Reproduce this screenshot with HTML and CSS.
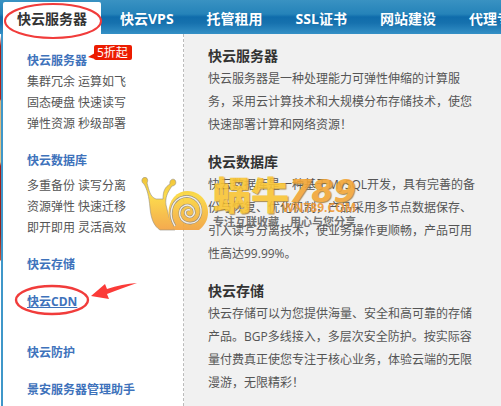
FILE: index.html
```html
<!DOCTYPE html>
<html lang="zh-CN">
<head>
  <meta charset="UTF-8">
  <meta name="viewport" content="width=device-width, initial-scale=1.0">
  <title>快云服务器</title>
  <link rel="stylesheet" href="styles.css">
</head>
<body>
  <nav class="topnav">
    <a class="tab active" href="#">快云服务器</a>
    <a class="tab" href="#">快云VPS</a>
    <a class="tab" href="#">托管租用</a>
    <a class="tab" href="#">SSL证书</a>
    <a class="tab" href="#">网站建设</a>
    <a class="tab" href="#">代理专区</a>
  </nav>

  <div class="panel">
    <div class="banner-edge"></div>

    <aside class="menu">
      <section class="group">
        <h3><a href="#">快云服务器</a><span class="badge">5折起</span></h3>
        <p>集群冗余 运算如飞</p>
        <p>固态硬盘 快速读写</p>
        <p>弹性资源 秒级部署</p>
      </section>
      <section class="group database">
        <h3><a href="#">快云数据库</a></h3>
        <p>多重备份 读写分离</p>
        <p>资源弹性 快速迁移</p>
        <p>即开即用 灵活高效</p>
      </section>
      <section class="group">
        <h3><a href="#">快云存储</a></h3>
      </section>
      <section class="group cdn">
        <h3><a class="current" href="#">快云CDN</a></h3>
      </section>
      <section class="group">
        <h3><a href="#">快云防护</a></h3>
      </section>
      <section class="group">
        <h3><a href="#">景安服务器管理助手</a></h3>
      </section>
    </aside>

    <main class="detail">
      <section>
        <h2>快云服务器</h2>
        <p>快云服务器是一种处理能力可弹性伸缩的计算服务，采用云计算技术和大规模分布存储技术，使您快速部署计算和网络资源！</p>
      </section>
      <section>
        <h2>快云数据库</h2>
        <p>快云数据库是一种基于MySQL开发，具有完善的备份与恢复、优化机制，产品采用多节点数据保存、引入读写分离技术，使业务操作更顺畅，产品可用性高达99.99%。</p>
      </section>
      <section>
        <h2>快云存储</h2>
        <p>快云存储可以为您提供海量、安全和高可靠的存储产品。BGP多线接入，多层次安全防护。按实际容量付费真正使您专注于核心业务，体验云端的无限漫游，无限精彩！</p>
      </section>
    </main>
  </div>

  <!-- 水印 -->
  <div class="watermark">
    <svg class="snail" width="68" height="54" viewBox="0 0 68 54">
      <defs>
        <linearGradient id="gold" gradientUnits="userSpaceOnUse" x1="0" y1="0" x2="0" y2="53">
          <stop offset="0" stop-color="#eebd22"/>
          <stop offset=".35" stop-color="#fcd83a"/>
          <stop offset="1" stop-color="#f3a13c"/>
        </linearGradient>
      </defs>
      <path d="M2 1C5-1 8 2 6 6C8 13 9 20 15 22L22 22C22 14 24 10 29 7C28 3 32 1 34 3C36 6 34 9 31 9C26 16 24 21 25 28L28 40L34 53H19C13 49 10 42 9 31C8 19 6 12 3 7C1 6 0 3 2 1Z" fill="url(#gold)" stroke="#8c8474" stroke-width=".6"/>
      <path d="M34 53C25 42 26 28 33 20C42 10 59 13 65 26C70 38 65 48 58 53Z" fill="url(#gold)"/>
      <path d="M34 49C27 38 30 26 39 21C50 16 61 24 60 36C58 49 42 49 39 39C37 29 47 25 52 31C56 38 49 43 45 38C43 34 46 32 49 33" fill="none" stroke="#8b8376" stroke-width="2.6"/>
      <path d="M34 49C27 38 30 26 39 21C50 16 61 24 60 36C58 49 42 49 39 39C37 29 47 25 52 31C56 38 49 43 45 38C43 34 46 32 49 33" fill="none" stroke="#f3eee3" stroke-width="1.4"/>
    </svg>
    <div class="brand">
      <strong>蜗牛<b>789</b></strong>
      <span class="slogan">专注互联收藏&emsp;用心与您分享</span>
      <span class="domain">WN789.COM</span>
    </div>
  </div>

  <!-- 红色标注 -->
  <svg class="mark mark-tab" width="100" height="40" viewBox="0 0 100 40">
    <ellipse cx="50" cy="19" rx="48" ry="17" fill="none" stroke="#f13c3b" stroke-width="2"/>
  </svg>
  <svg class="mark mark-cdn" width="126" height="36" viewBox="0 0 126 36">
    <ellipse cx="38" cy="19" rx="36" ry="14" fill="none" stroke="#f13c3b" stroke-width="2.4"/>
    <path d="M77 15L91 3L93 8Q108 3 123 2Q106 8 93 13L95 18Z" fill="#fb3b38"/>
  </svg>
</body>
</html>
```
FILE: styles.css
```css
* { box-sizing: border-box; margin: 0; padding: 0; }

body {
  position: relative;
  min-height: 100vh;
  display: flex;
  flex-direction: column;
  overflow: hidden;
  background: #f1f1f1;
  color: #555;
  font-family: "Open Sans", "Noto Sans CJK SC", sans-serif;
  font-size: 12px;
}

a { color: inherit; text-decoration: none; }

.topnav {
  display: flex;
  gap: 1px;
  height: 34px;
  padding: 2px 0 0 3px;
  overflow: hidden;
  background: linear-gradient(#3992c2 0, #2583b9 14px, #0f6cab 17px, #1671ae 23px, #3490c6 34px);
}

.tab {
  flex: none;
  padding: 0 16px;
  color: #fff;
  font-size: 14px;
  font-weight: bold;
  line-height: 34px;
}

.tab.active {
  padding: 0 14px;
  margin-right: 2px;
  background: #fff;
  color: #333;
  border-radius: 2px 2px 0 0;
}

.panel { display: flex; flex: 1; }

.banner-edge {
  width: 1px;
  background: linear-gradient(#fff 2px, #a51d16 12px, #b32319 65px, #d9b27a 67px, #e2c78c 128px, #a31f1a 132px, #8d2520 200px, #c7563a 226px, #fff 227px);
}

/* 左侧菜单 */
.menu {
  flex: none;
  width: 183px;
  padding: 16px 0 0 24px;
  background: #fff;
  border-left: 2px solid #3f97c9;
  border-right: 1px dashed #bbb;
}

.group { margin-bottom: 16px; line-height: 21px; }
.group.database h3 { margin-bottom: 4px; }
.group.cdn { margin-bottom: 30px; }

.group h3 {
  position: relative;
  color: #3e72bb;
  font-size: 12px;
}

.current { text-decoration: underline; }

.badge {
  position: absolute;
  top: -5px;
  left: 67px;
  padding: 0 4px 0 3px;
  background: #ec1c00;
  border-radius: 2px;
  color: #fff;
  font-weight: normal;
  line-height: 15px;
}

.badge::before {
  content: "";
  position: absolute;
  left: -6px;
  bottom: 1px;
  border: solid transparent;
  border-width: 4px 7px 2px 0;
  border-right-color: #ec1c00;
}

/* 右侧介绍 */
.detail { flex: 1; padding: 11px 23px 0 24px; }
.detail section { margin-bottom: 15px; }
.detail h2 { color: #333; font-size: 14px; line-height: 22px; }
.detail p { line-height: 23px; }

/* 水印 */
.watermark {
  position: absolute;
  top: 177px;
  left: 141px;
  display: flex;
  opacity: .9;
  pointer-events: none;
}

.brand {
  position: relative;
  padding-left: 4px;
  white-space: nowrap;
}

.brand strong {
  display: flex;
  height: 38px;
  color: #f9c535;
  font-size: 38px;
  font-weight: 900;
  line-height: 34px;
  text-shadow: 1px 1px 1px #a08040;
}

.brand b {
  color: #f3a637;
  font-family: "DejaVu Sans", sans-serif;
  font-size: 32px;
  font-style: italic;
  line-height: 28px;
}

.slogan {
  display: block;
  color: #666;
  font-size: 11px;
  font-weight: bold;
  line-height: 14px;
}

.domain {
  position: absolute;
  top: 24px;
  right: 0;
  color: #ee9834;
  font-size: 12px;
  font-weight: bold;
  line-height: 14px;
}

/* 标注 */
.mark { position: absolute; pointer-events: none; }
.mark-tab { top: 2px; left: 3px; }
.mark-cdn { top: 281px; left: 14px; }
```
